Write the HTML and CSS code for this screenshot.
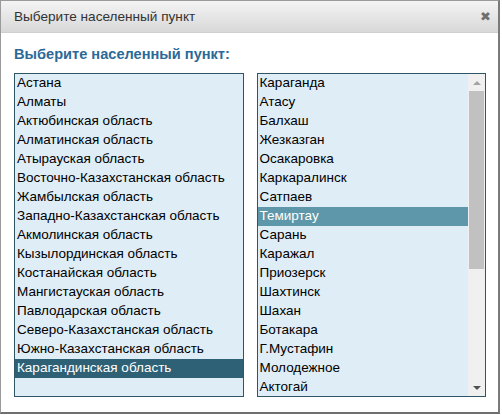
FILE: index.html
```html
<!DOCTYPE html>
<html lang="ru">
<head>
<meta charset="utf-8">
<link rel="stylesheet" href="styles.css">
</head>
<body>
<div class="dialog">
  <div class="titlebar">
    <span class="title">Выберите населенный пункт</span>
    <span class="close">✖</span>
  </div>
  <div class="content">
    <h2 class="heading">Выберите населенный пункт:</h2>
    <div class="lists">
      <div class="listbox">
        <div class="items">
          <div class="item">Астана</div>
          <div class="item">Алматы</div>
          <div class="item">Актюбинская область</div>
          <div class="item">Алматинская область</div>
          <div class="item">Атырауская область</div>
          <div class="item">Восточно-Казахстанская область</div>
          <div class="item">Жамбылская область</div>
          <div class="item">Западно-Казахстанская область</div>
          <div class="item">Акмолинская область</div>
          <div class="item">Кызылординская область</div>
          <div class="item">Костанайская область</div>
          <div class="item">Мангистауская область</div>
          <div class="item">Павлодарская область</div>
          <div class="item">Северо-Казахстанская область</div>
          <div class="item">Южно-Казахстанская область</div>
          <div class="item selected">Карагандинская область</div>
        </div>
      </div>
      <div class="listbox">
        <div class="items">
          <div class="item">Караганда</div>
          <div class="item">Атасу</div>
          <div class="item">Балхаш</div>
          <div class="item">Жезказган</div>
          <div class="item">Осакаровка</div>
          <div class="item">Каркаралинск</div>
          <div class="item">Сатпаев</div>
          <div class="item selected-inactive">Темиртау</div>
          <div class="item">Сарань</div>
          <div class="item">Каражал</div>
          <div class="item">Приозерск</div>
          <div class="item">Шахтинск</div>
          <div class="item">Шахан</div>
          <div class="item">Ботакара</div>
          <div class="item">Г.Мустафин</div>
          <div class="item">Молодежное</div>
          <div class="item">Актогай</div>
        </div>
        <div class="scrollbar">
          <div class="arrow up"></div>
          <div class="track"><div class="thumb"></div></div>
          <div class="arrow down"></div>
        </div>
      </div>
    </div>
  </div>
</div>
</body>
</html>
```

FILE: styles.css
```css
* { box-sizing: border-box; }
html, body { margin: 0; padding: 0; background: #ffffff; }
body { font-family: "Liberation Sans", Arial, sans-serif; font-size: 13.5px; color: #000; }

.dialog {
  width: 500px;
  height: 414px;
  border: 1px solid #9a9a9a;
  border-right: 2px solid #7a7a7a;
  border-bottom: 2px solid #6f6f6f;
  background: #fff;
  display: flex;
  flex-direction: column;
}

.titlebar {
  height: 32px;
  flex: none;
  background: linear-gradient(#f4f4f4, #d8d8d8);
  border-bottom: 1px solid #cfcfcf;
  display: flex;
  align-items: center;
  justify-content: space-between;
  padding: 0 7px 1px 13px;
}
.title { font-size: 13.6px; color: #333; }
.close { font-size: 13px; color: #6f6f6f; }

.content { padding: 12px 12px 0 13px; }
.heading {
  margin: 0 0 10px 0;
  font-size: 14.6px;
  font-weight: bold;
  color: #2b6a97;
  line-height: 18px;
}

.lists { display: flex; gap: 13px; }

.listbox {
  width: 230px;
  height: 324px;
  border: 1px solid #2f5566;
  background: #dfedf7;
  display: flex;
  overflow: hidden;
}
.items { flex: 1; min-width: 0; }
.item {
  height: 19px;
  line-height: 18px;
  padding-left: 2px;
  white-space: nowrap;
}
.item.selected { background: #2f6176; color: #fff; }
.item.selected-inactive { background: #5e97a9; color: #fff; }

.scrollbar {
  width: 17px;
  flex: none;
  background: #f0f0f0;
  display: flex;
  flex-direction: column;
}
.arrow { height: 17px; flex: none; display: flex; align-items: center; justify-content: center; }
.arrow.up::before {
  content: "";
  border-left: 4px solid transparent;
  border-right: 4px solid transparent;
  border-bottom: 4px solid #a3a3a3;
}
.arrow.down::before {
  content: "";
  border-left: 4px solid transparent;
  border-right: 4px solid transparent;
  border-top: 4px solid #505050;
}
.track { flex: 1; padding: 0 1px; }
.thumb { height: 178px; background: #c1c1c1; }
```
